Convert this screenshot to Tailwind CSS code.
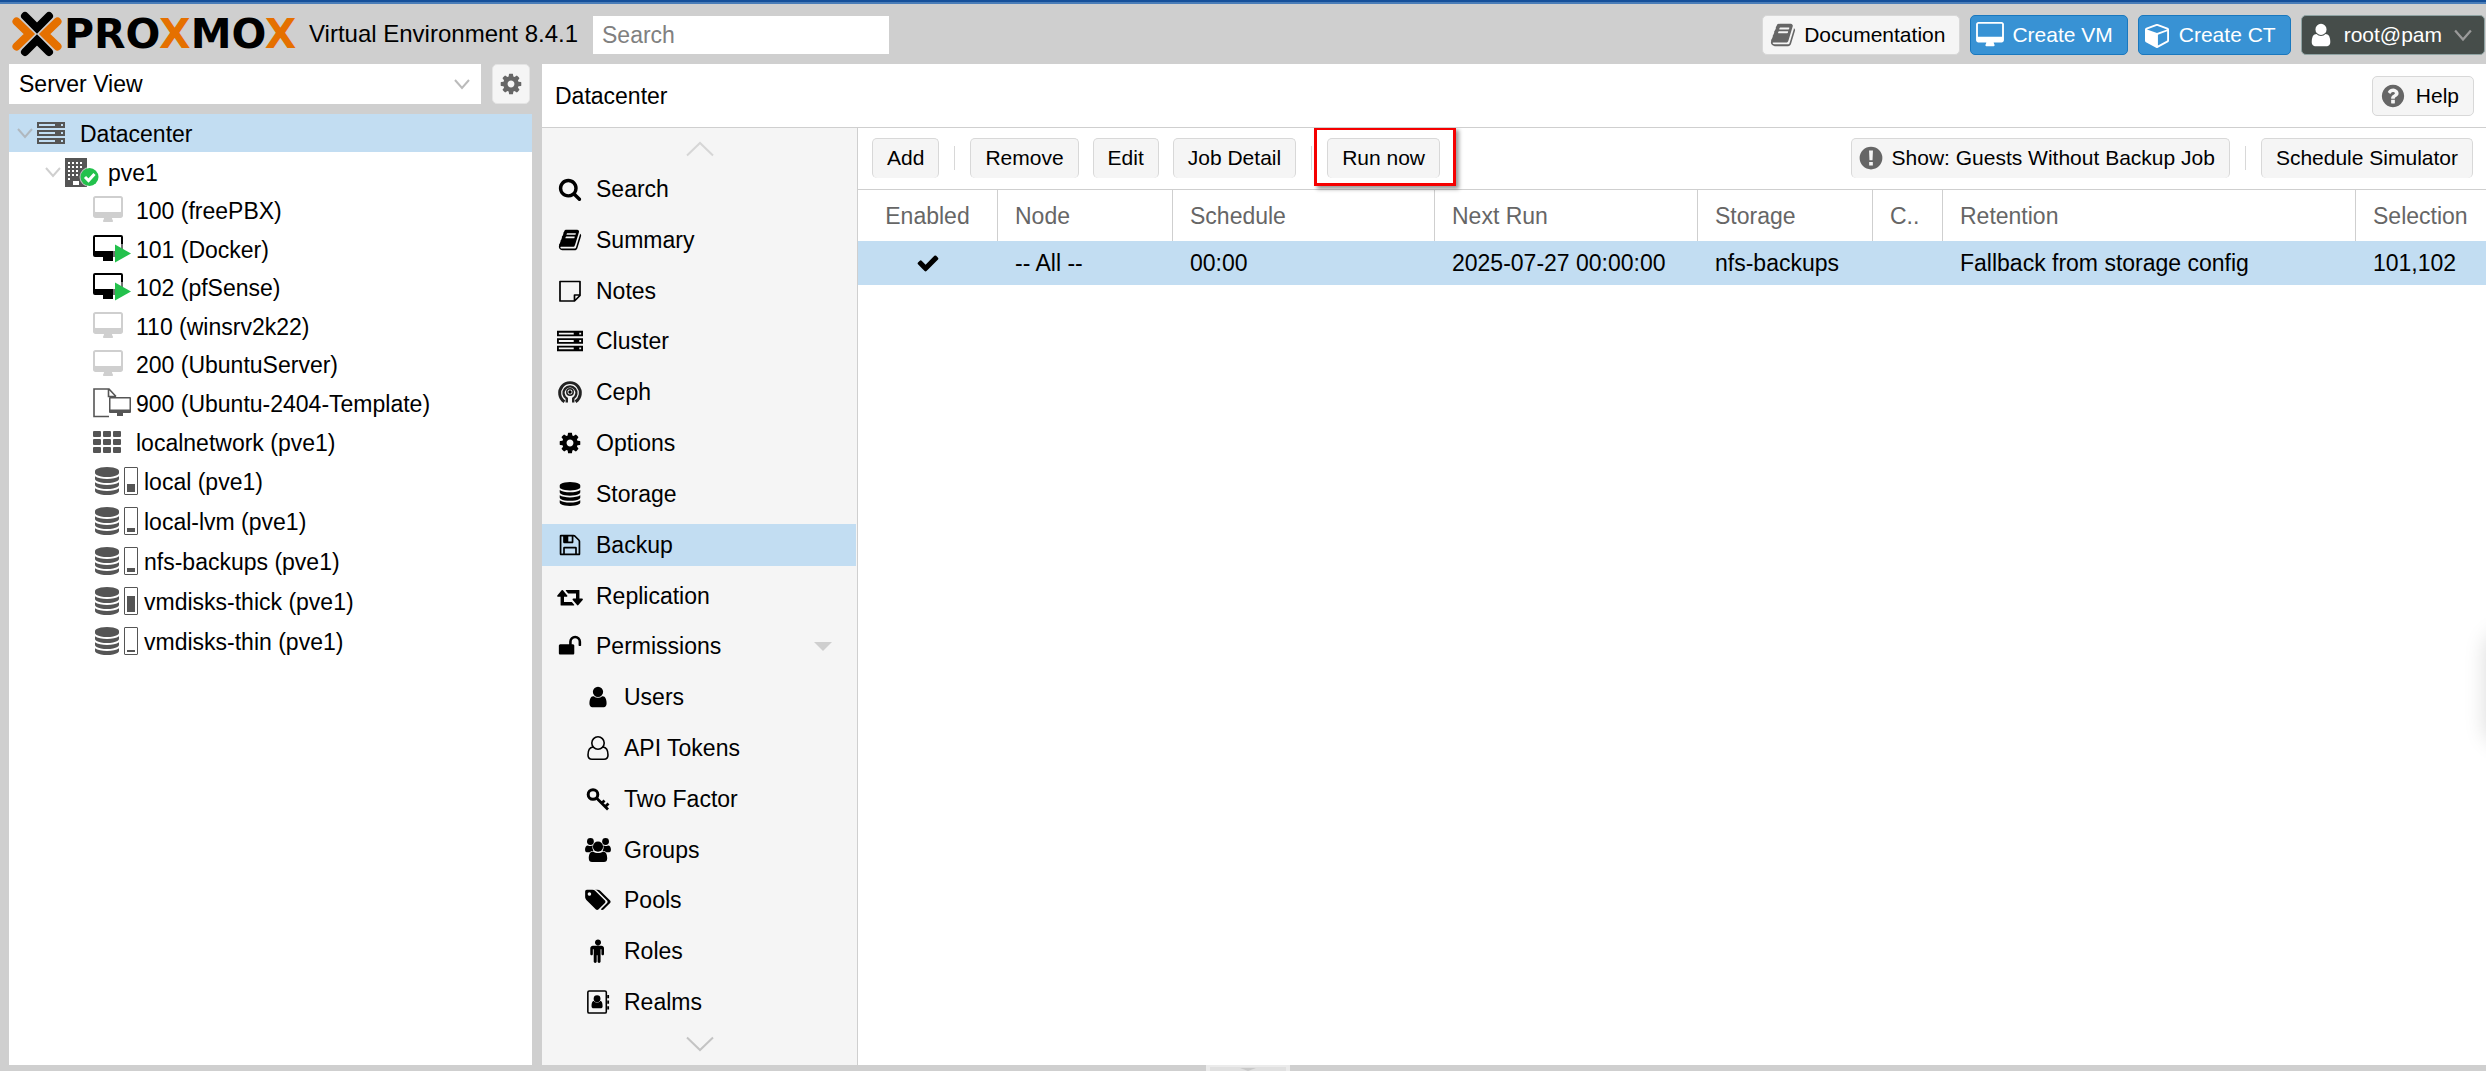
<!DOCTYPE html>
<html lang="en">
<head>
<meta charset="utf-8">
<title>Proxmox Virtual Environment</title>
<script src="https://cdn.jsdelivr.net/npm/@tailwindcss/browser@4"></script>
</head>
<body class="flex h-screen flex-col overflow-hidden bg-[#cfcfcf] font-['Liberation_Sans',Arial,sans-serif] text-[23px] leading-7 text-black">

<svg class="hidden" aria-hidden="true">
  <symbol id="i-search" viewBox="0 0 1792 1792"><path d="M1216 832q0-185-131.5-316.5t-316.5-131.5-316.5 131.5-131.5 316.5 131.5 316.5 316.5 131.5 316.5-131.5 131.5-316.5zm512 832q0 52-38 90t-90 38q-54 0-90-38l-343-342q-179 124-399 124-143 0-273.5-55.5t-225-150-150-225-55.5-273.5 55.5-273.5 150-225 225-150 273.5-55.5 273.5 55.5 225 150 150 225 55.5 273.5q0 220-124 399l343 343q37 37 37 90z"/></symbol>
  <symbol id="i-book" viewBox="0 0 1792 1792"><path d="M1703 478q40 57 18 129l-275 906q-19 64-76.5 107.5t-122.5 43.5h-923q-77 0-148.5-53.5t-99.5-131.5q-24-67-2-127 0-4 3-27t4-37q1-8-3-21.5t-3-19.5q2-11 8-21t16.5-23.5 16.5-23.5q23-38 45-91.5t30-91.5q3-10 .5-30t-.5-28q3-11 17-28t17-23q21-36 42-92t25-90q1-9-2.5-32t.5-28q4-13 22-30.5t22-22.5q19-26 42.5-84.5t27.5-96.5q1-8-3-25.5t-2-26.5q2-8 9-18t18-23 17-21q8-12 16.5-30.5t15-35 16-36 19.5-32 26.5-23.5 36-11.5 47.5 5.5l-1 3q38-9 51-9h761q74 0 114 56t18 130l-274 906q-36 119-71.5 153.5t-128.5 34.5h-869q-27 0-38 15-11 16-1 43 24 70 144 70h923q29 0 56-15.5t35-41.5l300-987q7-22 5-57 38 15 59 43zm-1064 2q-4 13 2 22.5t20 9.5h608q13 0 25.5-9.5t16.5-22.5l21-64q4-13-2-22.5t-20-9.5h-608q-13 0-25.5 9.5t-16.5 22.5zm-83 256q-4 13 2 22.5t20 9.5h608q13 0 25.5-9.5t16.5-22.5l21-64q4-13-2-22.5t-20-9.5h-608q-13 0-25.5 9.5t-16.5 22.5z"/></symbol>
  <symbol id="i-note" viewBox="0 0 24 24"><path d="M2 2.500 H22 V16.500 L16.500 22 H2 Z M22 16 H16.500 V22" fill="none" stroke="currentColor" stroke-width="1.700" stroke-linejoin="round"/></symbol>
  <symbol id="i-server" viewBox="0 0 28 24"><path fill-rule="evenodd" d="M0 1H28V7H0ZM2 3V5H18V3ZM24 3V5H26V3ZM0 9H28V15H0ZM2 11V13H18V11ZM24 11V13H26V11ZM0 17H28V23H0ZM2 19V21H18V19ZM24 19V21H26V19Z"/></symbol>
  <symbol id="i-ceph" viewBox="0 0 26 26"><g fill="none" stroke="#222"><path d="M7 23.500 A11.200 11.200 0 1 1 19 23.500" stroke-width="3.200"/><path d="M9.500 24.500 V20 A7 7 0 1 1 16.500 20 V24.500" stroke-width="2.600"/><circle cx="13" cy="13" r="3.500" stroke-width="1.600"/></g><circle cx="13" cy="13" r="1.800"/></symbol>
  <symbol id="i-cog" viewBox="0 0 1792 1792"><path d="M1152 896q0-106-75-181t-181-75-181 75-75 181 75 181 181 75 181-75 75-181zm512-109v222q0 12-8 23t-20 13l-185 28q-19 54-39 91 35 50 107 138 10 12 10 25t-9 23q-27 37-99 108t-94 71q-12 0-26-9l-138-108q-44 23-91 38-16 136-29 186-7 28-36 28h-222q-14 0-24.5-8.5t-11.5-21.5l-28-184q-49-16-90-37l-141 107q-10 9-25 9-14 0-25-11-126-114-165-168-7-10-7-23 0-12 8-23 15-21 51-66.5t54-70.500q-27-50-41-99l-183-27q-13-2-21-12.5t-8-23.5v-222q0-12 8-23t19-13l186-28q14-46 39-92-40-57-107-138-10-12-10-24 0-10 9-23 26-36 98.500-107.500t94.500-71.500q13 0 26 10l138 107q44-23 91-38 16-136 29-186 7-28 36-28h222q14 0 24.500 8.500t11.500 21.500l28 184q49 16 90 37l142-107q9-9 24-9 13 0 25 10 129 119 165 170 7 8 7 22 0 12-8 23-15 21-51 66.500t-54 70.500q26 50 41 98l183 28q13 2 21 12.500t8 23.500z"/></symbol>
  <symbol id="i-db" viewBox="0 0 1792 1792"><path d="M896 768q237 0 443-43t325-127v170q0 69-103 128t-280 93.500-385 34.500-385-34.500-280-93.500-103-128v-170q119 84 325 127t443 43zm0 768q237 0 443-43t325-127v170q0 69-103 128t-280 93.500-385 34.500-385-34.500-280-93.500-103-128v-170q119 84 325 127t443 43zm0-384q237 0 443-43t325-127v170q0 69-103 128t-280 93.500-385 34.500-385-34.500-280-93.500-103-128v-170q119 84 325 127t443 43zm0-1152q208 0 385 34.500t280 93.500 103 128v128q0 69-103 128t-280 93.500-385 34.500-385-34.500-280-93.500-103-128v-128q0-69 103-128t280-93.500 385-34.500z"/></symbol>
  <symbol id="i-floppy" viewBox="0 0 1792 1792"><path d="M512 1536h768v-384h-768v384zm896 0h128v-896q0-14-10-38.500t-20-34.500l-281-281q-10-10-34-20t-39-10v416q0 40-28 68t-68 28h-576q-40 0-68-28t-28-68v-416h-128v1280h128v-416q0-40 28-68t68-28h832q40 0 68 28t28 68v416zm-384-928v-320q0-13-9.500-22.500t-22.500-9.500h-192q-13 0-22.500 9.500t-9.500 22.500v320q0 13 9.500 22.500t22.500 9.500h192q13 0 22.500-9.500t9.500-22.500zm640 32v928q0 40-28 68t-68 28h-1344q-40 0-68-28t-28-68v-1344q0-40 28-68t68-28h928q40 0 88 20t76 48l280 280q28 28 48 76t20 88z"/></symbol>
  <symbol id="i-retweet" viewBox="-64 0 1920 1792"><path d="M1216 1568q0 13-9.500 22.500t-22.500 9.500h-960q-8 0-13.500-2t-9-7-5.500-8-3-11.500-1-11.500v-600h-192q-26 0-45-19t-19-45q0-24 15-41l320-384q19-22 49-22t49 22l320 384q15 17 15 41 0 26-19 45t-45 19h-192v384h576q16 0 25 11l160 192q7 10 7 21zm640-416q0 24-15 41l-320 384q-20 23-49 23t-49-23l-320-384q-15-17-15-41 0-26 19-45t45-19h192v-384h-576q-16 0-25-12l-160-192q-7-9-7-20 0-13 9.500-22.500t22.500-9.500h960q8 0 13.500 2t9 7 5.500 8 3 11.500 1 11.500v600h192q26 0 45 19t19 45z"/></symbol>
  <symbol id="i-unlock" viewBox="0 0 1792 1792"><path d="M1728 576v256q0 26-19 45t-45 19h-64q-26 0-45-19t-19-45v-256q0-106-75-181t-181-75-181 75-75 181v192h96q40 0 68 28t28 68v576q0 40-28 68t-68 28h-960q-40 0-68-28t-28-68v-576q0-40 28-68t68-28h672v-192q0-185 131.500-316.500t316.500-131.500 316.500 131.500 131.500 316.500z"/></symbol>
  <symbol id="i-user" viewBox="0 0 1792 1792"><path d="M1536 1399q0 109-62.500 187t-150.500 78h-854q-88 0-150.500-78t-62.500-187q0-85 8.500-160.500t31.500-152 58.500-131 94-89 134.500-34.500q131 128 313 128t313-128q76 0 134.500 34.500t94 89 58.500 131 31.500 152 8.500 160.500zm-256-887q0 159-112.500 271.500t-271.500 112.500-271.500-112.500-112.500-271.500 112.500-271.500 271.500-112.500 271.500 112.500 112.500 271.500z"/></symbol>
  <symbol id="i-user-o" viewBox="0 0 24 24"><g fill="none" stroke="currentColor" stroke-width="1.600"><circle cx="12" cy="7" r="6.200"/><path d="M7 11 C3 11.500 2 16 2 19 C2 22 4 23.200 6 23.200 H18 C20 23.200 22 22 22 19 C22 16 21 11.500 17 11"/></g></symbol>
  <symbol id="i-key" viewBox="0 0 24 24"><g fill="none" stroke="currentColor"><circle cx="7" cy="7.500" r="4.800" stroke-width="3"/><path d="M10.500 11 L22 22.500 M15.500 16.500 L18.500 13.500 M19 20 L22.500 16.500" stroke-width="2.800"/></g></symbol>
  <symbol id="i-users" viewBox="0 0 28 26"><circle cx="5.800" cy="3.800" r="3.700"/><circle cx="22.200" cy="3.800" r="3.700"/><path d="M3 8 C5 9 7 8.800 8.300 8.200 A6 6 0 0 0 9 14 C7 14 6 14.500 5 15.500 H2.500 C0 15.500 0 13.500 0 12.500 C0 10 1 8 3 8Z M25 8 C23 9 21 8.800 19.700 8.200 A6 6 0 0 1 19 14 C21 14 22 14.500 23 15.500 H25.500 C28 15.500 28 13.500 28 12.500 C28 10 27 8 25 8Z"/><circle cx="14" cy="9.400" r="5.500"/><path d="M8.500 14.500 C12 17 16 17 19.500 14.500 C23 14.500 24 18.500 24 22 C24 25 22.500 26 20.500 26 H7.500 C5.500 26 4 25 4 22 C4 18.500 5 14.500 8.500 14.500Z"/></symbol>
  <symbol id="i-tags" viewBox="0 0 1920 1792"><path d="M448 448q0-53-37.500-90.500t-90.500-37.500-90.500 37.500-37.500 90.500 37.500 90.500 90.500 37.500 90.500-37.500 37.500-90.500zm1067 576q0 53-37 90l-491 492q-39 37-91 37-53 0-90-37l-715-716q-38-37-64.500-101t-26.500-117v-416q0-52 38-90t90-38h416q53 0 117 26.500t102 64.500l715 714q37 39 37 91zm384 0q0 53-37 90l-491 492q-39 37-91 37-36 0-59-14t-53-45l470-470q37-37 37-90 0-52-37-91l-715-714q-38-38-102-64.500t-117-26.500h224q53 0 117 26.500t102 64.500l715 714q37 39 37 91z"/></symbol>
  <symbol id="i-male" viewBox="0 0 1792 1792"><path d="M1344 704v416q0 40-28 68t-68 28-68-28-28-68v-352h-64v912q0 46-33 79t-79 33-79-33-33-79v-464h-64v464q0 46-33 79t-79 33-79-33-33-79v-912h-64v352q0 40-28 68t-68 28-68-28-28-68v-416q0-80 56-136t136-56h640q80 0 136 56t56 136zm-224-448q0 93-65.500 158.500t-158.500 65.500-158.500-65.500-65.500-158.500 65.500-158.500 158.500-65.500 158.500 65.500 65.500 158.500z"/></symbol>
  <symbol id="i-address" viewBox="0 0 24 26"><rect x="1" y="1" width="20" height="24" rx="1.500" fill="none" stroke="currentColor" stroke-width="1.700"/><circle cx="11" cy="9.500" r="3.700"/><path d="M7.500 12 C9.500 14.200 12.500 14.200 14.500 12 C16.500 12 17 15 17 17.500 C17 19 16 19.800 15 19.800 H7 C6 19.800 5 19 5 17.500 C5 15 5.500 12 7.500 12Z M22 5.500 H24 V9 H22Z M22 11.500 H24 V15 H22Z M22 17.500 H24 V21 H22Z"/></symbol>
  <symbol id="i-desktop" viewBox="-64 0 1920 1792"><path d="M1728 992v-832q0-13-9.500-22.500t-22.500-9.500h-1600q-13 0-22.500 9.500t-9.500 22.500v832q0 13 9.500 22.500t22.500 9.500h1600q13 0 22.500-9.500t9.500-22.500zm128-832v1088q0 66-47 113t-113 47h-544q0 37 16 77.500t32 71 16 43.500q0 26-19 45t-45 19h-512q-26 0-45-19t-19-45q0-14 16-44t32-70 16-78h-544q-66 0-113-47t-47-113v-1088q0-66 47-113t113-47h1600q66 0 113 47t47 113z"/></symbol>
  <symbol id="i-cube" viewBox="0 0 1664 1792"><path d="M896 1629l640-349v-636l-640 233v752zm-64-865l698-254-698-254-698 254 698 254zm832-252v768q0 35-18 65t-49 47l-704 384q-28 16-61 16t-61-16l-704-384q-31-17-49-47t-18-65v-768q0-40 23-73t61-47l704-256q22-8 44-8t44 8l704 256q38 14 61 47t23 73z"/></symbol>
  <symbol id="i-question" viewBox="0 0 1792 1792"><path d="M1024 1376v-192q0-14-9-23t-23-9h-192q-14 0-23 9t-9 23v192q0 14 9 23t23 9h192q14 0 23-9t9-23zm256-672q0-88-55.500-163t-138.500-116-170-41q-243 0-371 213-15 24 8 42l132 100q7 6 19 6 16 0 25-12 53-68 86-92 34-24 86-24 48 0 85.500 26t37.500 59q0 38-20 61t-68 45q-63 28-115.500 86.500t-52.500 125.500v36q0 14 9 23t23 9h192q14 0 23-9t9-23q0-19 21.500-49.500t54.500-49.500q32-18 49-28.500t46-35 44.500-48 28-60.500 12.500-81zm384 192q0 209-103 385.500t-279.500 279.500-385.500 103-385.500-103-279.500-279.500-103-385.500 103-385.500 279.500-279.500 385.500-103 385.500 103 279.500 279.500 103 385.500z"/></symbol>
  <symbol id="i-exclaim" viewBox="0 0 24 24"><path fill-rule="evenodd" d="M12 1.500A10.500 10.500 0 1 0 12 22.500A10.500 10.500 0 1 0 12 1.500ZM10.200 5H13.800L13.400 14H10.600ZM10.300 15.700H13.700V19H10.300Z"/></symbol>
  <symbol id="i-check" viewBox="0 0 1792 1792"><path d="M1671 566q0 40-28 68l-724 724-136 136q-28 28-68 28t-68-28l-136-136-362-362q-28-28-28-68t28-68l136-136q28-28 68-28t68 28l294 295 656-657q28-28 68-28t68 28l136 136q28 28 28 68z"/></symbol>
  <symbol id="i-down" viewBox="0 0 16 16"><path d="M1 4 L8 12 L15 4" fill="none" stroke="currentColor" stroke-width="2"/></symbol>
  <symbol id="i-wide-down" viewBox="0 0 28 16"><path d="M1 1.500 L14 14 L27 1.500" fill="none" stroke="currentColor" stroke-width="2"/></symbol>
  <symbol id="i-wide-up" viewBox="0 0 28 16"><path d="M1 14.500 L14 2 L27 14.500" fill="none" stroke="currentColor" stroke-width="2"/></symbol>
  <symbol id="i-node" viewBox="0 0 36 30"><path fill-rule="evenodd" d="M0 1H22V30H0ZM3 5V7H5V5ZM7 5V7H9V5ZM11 5V7H13V5ZM15 5V7H17V5ZM3 9V11H5V9ZM7 9V11H9V9ZM11 9V11H13V9ZM15 9V11H17V9ZM3 13V15H5V13ZM7 13V15H9V13ZM11 13V15H13V13ZM3 17V19H5V17ZM7 17V19H9V17ZM11 17V19H13V17ZM3 21V23H5V21ZM8 24V28H14V24Z"/><circle cx="24.500" cy="20" r="10" fill="#fff" fill-opacity=".6"/><circle cx="24.500" cy="20" r="9" fill="#23c14c"/><path d="M20 20 L23.500 23.500 L29.500 17" fill="none" stroke="#fff" stroke-width="3"/></symbol>
  <symbol id="i-running" viewBox="0 0 38 30"><path fill-rule="evenodd" d="M2 1H28Q30 1 30 3V21Q30 23 28 23H20V27H10V23H2Q0 23 0 21V3Q0 1 2 1ZM2 3V17H28V3Z"/><path d="M20 10H30V27H20Z" fill="#fff" fill-opacity=".45"/><path d="M22 10.500L38 19.500L22 28.500Z" fill="#23c14c"/></symbol>
  <symbol id="i-template" viewBox="0 0 38 30"><path d="M16 28.500H1V1H16L23 8.500M15.500 1V8.500H23" fill="none" stroke="currentColor" stroke-width="1.600"/><path fill-rule="evenodd" d="M17 9H37Q38 9 38 10V24Q38 25 37 25H30V28H24V25H17Q16 25 16 24V10Q16 9 17 9ZM17.500 10.500V21.500H36.500V10.500Z"/></symbol>
  <symbol id="i-grid" viewBox="0 0 28 24"><path d="M1 1h6a1 1 0 0 1 1 1v4a1 1 0 0 1-1 1h-6a1 1 0 0 1-1-1v-4a1 1 0 0 1 1-1zM11 1h6a1 1 0 0 1 1 1v4a1 1 0 0 1-1 1h-6a1 1 0 0 1-1-1v-4a1 1 0 0 1 1-1zM21 1h6a1 1 0 0 1 1 1v4a1 1 0 0 1-1 1h-6a1 1 0 0 1-1-1v-4a1 1 0 0 1 1-1zM1 9h6a1 1 0 0 1 1 1v4a1 1 0 0 1-1 1h-6a1 1 0 0 1-1-1v-4a1 1 0 0 1 1-1zM11 9h6a1 1 0 0 1 1 1v4a1 1 0 0 1-1 1h-6a1 1 0 0 1-1-1v-4a1 1 0 0 1 1-1zM21 9h6a1 1 0 0 1 1 1v4a1 1 0 0 1-1 1h-6a1 1 0 0 1-1-1v-4a1 1 0 0 1 1-1zM1 17h6a1 1 0 0 1 1 1v4a1 1 0 0 1-1 1h-6a1 1 0 0 1-1-1v-4a1 1 0 0 1 1-1zM11 17h6a1 1 0 0 1 1 1v4a1 1 0 0 1-1 1h-6a1 1 0 0 1-1-1v-4a1 1 0 0 1 1-1zM21 17h6a1 1 0 0 1 1 1v4a1 1 0 0 1-1 1h-6a1 1 0 0 1-1-1v-4a1 1 0 0 1 1-1z"/></symbol>
</svg>

<div class="h-1 shrink-0 border-b-2 border-[#4a7db8] bg-[#15509a]"></div>

<header class="flex h-[60px] shrink-0 items-center pt-[2px] pl-[11px]">
  <a href="#" class="mb-[3px] flex items-center" aria-label="Proxmox">
    <svg class="h-[46px] w-[52px]" viewBox="0 0 52 46" fill="none" stroke-width="8" stroke-linecap="round">
      <path d="M5.500 10.500 L18.500 23 L5.500 35.500 M46.500 10.500 L33.500 23 L46.500 35.500" stroke="#e57000"/>
      <path d="M14 5 L26 17.500 L38 5 M14 41 L26 28.500 L38 41" stroke="#cfcfcf" stroke-width="10" stroke-linecap="butt"/>
      <path d="M14 5 L26 17 L38 5 M14 41 L26 29 L38 41" stroke="#000"/>
    </svg>
    <span class="w-[246px] pl-px font-['DejaVu_Sans',sans-serif] text-[41px] leading-[46px] font-bold">PRO<span class="text-[#e57000]">X</span>MO<span class="text-[#e57000]">X</span></span>
  </a>
  <span class="mb-[2px] w-[284px] text-[24px] whitespace-nowrap">Virtual Environment 8.4.1</span>
  <input type="search" aria-label="Search" placeholder="Search" class="h-[38px] w-[296px] bg-white px-[9px] placeholder:text-[#808080]">
  <div class="ml-auto flex gap-[10px] pr-px text-[21px]">
    <a href="#" class="flex h-10 items-center gap-2 rounded-[5px] border border-[#d8d8d8] bg-[#f5f5f5] pr-[14px] pl-[7px]"><svg class="size-[26px] fill-[#666]"><use href="#i-book"/></svg>Documentation</a>
    <button class="flex h-10 items-center gap-2 rounded-[5px] border border-[#1a78be] bg-[#3892d4] pr-[14px] pl-[5px] text-white"><svg class="h-[26px] w-7 fill-white"><use href="#i-desktop"/></svg>Create VM</button>
    <button class="flex h-10 items-center gap-[10px] rounded-[5px] border border-[#1a78be] bg-[#3892d4] pr-[14px] pl-[6px] text-white"><svg class="h-[26px] w-6 fill-white"><use href="#i-cube"/></svg>Create CT</button>
    <button class="flex h-10 items-center rounded-[5px] border border-[#8fa3a3] bg-[#464d4a] pr-3 pl-[6px] text-white"><svg class="mr-[10px] size-[26px] fill-white"><use href="#i-user"/></svg>root@pam<svg class="ml-3 size-[18px] text-[#9a9a9a]"><use href="#i-down"/></svg></button>
  </div>
</header>

<div class="flex min-h-0 flex-1 pb-[6px]">
  <aside class="ml-[9px] flex w-[523px] shrink-0 flex-col">
    <div class="flex h-[50px] items-start gap-[11px]">
      <div class="relative w-[472px] bg-white">
        <select aria-label="View" class="block h-10 w-full appearance-none pl-[10px]"><option>Server View</option></select>
        <svg class="pointer-events-none absolute top-3 right-[11px] size-4 text-[#bbb]"><use href="#i-down"/></svg>
      </div>
      <button aria-label="Settings" class="flex h-10 w-[38px] items-center justify-center rounded-[5px] border border-[#e4e4e4] bg-[#f5f5f5]"><svg class="size-6 fill-[#666]"><use href="#i-cog"/></svg></button>
    </div>
    <nav aria-label="Resource tree" class="flex-1 bg-white">
      <ul class="fill-[#555] text-[#555] [&_a]:flex [&_a]:h-full [&_a]:items-center [&_span]:pt-[2px] [&_span]:text-black">
        <li class="h-[38px] bg-[#c2ddf2]"><a href="#" class="pl-2"><svg class="mr-1 size-4 text-[#b0b8bf]"><use href="#i-down"/></svg><svg class="mr-[15px] h-6 w-7"><use href="#i-server"/></svg><span>Datacenter</span></a></li>
        <li class="h-[39px]"><a href="#" class="pl-9"><svg class="mr-1 size-4 text-[#cfcfcf]"><use href="#i-down"/></svg><svg class="mr-[7px] h-[30px] w-9"><use href="#i-node"/></svg><span>pve1</span></a></li>
        <li class="h-[38px]"><a href="#" class="pl-[84px]"><svg class="mr-[13px] h-7 w-[30px] fill-[#cfcfcf]"><use href="#i-desktop"/></svg><span>100 (freePBX)</span></a></li>
        <li class="h-[39px]"><a href="#" class="pl-[84px]"><svg class="mr-[5px] h-[30px] w-[38px] fill-black"><use href="#i-running"/></svg><span>101 (Docker)</span></a></li>
        <li class="h-[38px]"><a href="#" class="pl-[84px]"><svg class="mr-[5px] h-[30px] w-[38px] fill-black"><use href="#i-running"/></svg><span>102 (pfSense)</span></a></li>
        <li class="h-[39px]"><a href="#" class="pl-[84px]"><svg class="mr-[13px] h-7 w-[30px] fill-[#cfcfcf]"><use href="#i-desktop"/></svg><span>110 (winsrv2k22)</span></a></li>
        <li class="h-[38px]"><a href="#" class="pl-[84px]"><svg class="mr-[13px] h-7 w-[30px] fill-[#cfcfcf]"><use href="#i-desktop"/></svg><span>200 (UbuntuServer)</span></a></li>
        <li class="h-[39px]"><a href="#" class="pl-[84px]"><svg class="mr-[5px] h-[30px] w-[38px]"><use href="#i-template"/></svg><span>900 (Ubuntu-2404-Template)</span></a></li>
        <li class="h-[39px]"><a href="#" class="pl-[84px]"><svg class="mr-[15px] h-6 w-7"><use href="#i-grid"/></svg><span>localnetwork (pve1)</span></a></li>
        <li class="h-10"><a href="#" class="pl-[84px]"><svg class="size-7"><use href="#i-db"/></svg><i class="mr-[6px] ml-[3px] flex h-7 w-[14px] items-end rounded-[1px] border border-[#555] p-[2px]"><i class="w-full bg-[#555]" style="height:8px"></i></i><span>local (pve1)</span></a></li>
        <li class="h-10"><a href="#" class="pl-[84px]"><svg class="size-7"><use href="#i-db"/></svg><i class="mr-[6px] ml-[3px] flex h-7 w-[14px] items-end rounded-[1px] border border-[#555] p-[2px]"><i class="w-full bg-[#555]" style="height:4px"></i></i><span>local-lvm (pve1)</span></a></li>
        <li class="h-10"><a href="#" class="pl-[84px]"><svg class="size-7"><use href="#i-db"/></svg><i class="mr-[6px] ml-[3px] flex h-7 w-[14px] items-end rounded-[1px] border border-[#555] p-[2px]"><i class="w-full bg-[#555]" style="height:4px"></i></i><span>nfs-backups (pve1)</span></a></li>
        <li class="h-10"><a href="#" class="pl-[84px]"><svg class="size-7"><use href="#i-db"/></svg><i class="mr-[6px] ml-[3px] flex h-7 w-[14px] items-end rounded-[1px] border border-[#555] p-[2px]"><i class="w-full bg-[#555]" style="height:16px"></i></i><span>vmdisks-thick (pve1)</span></a></li>
        <li class="h-[39px]"><a href="#" class="pl-[84px]"><svg class="size-7"><use href="#i-db"/></svg><i class="mr-[6px] ml-[3px] flex h-7 w-[14px] items-end rounded-[1px] border border-[#555] p-[2px]"><i class="w-full bg-[#555]" style="height:2px"></i></i><span>vmdisks-thin (pve1)</span></a></li>
      </ul>
    </nav>
  </aside>

  <main class="ml-[10px] flex min-w-0 flex-1 flex-col bg-white">
    <div class="flex h-16 shrink-0 items-center justify-between border-b border-[#cfcfcf] pr-3 pl-[13px]">
      <h1>Datacenter</h1>
      <button class="flex h-10 items-center gap-[10px] rounded-[5px] border border-[#d8d8d8] bg-[#f5f5f5] pr-[14px] pl-[7px] text-[21px]"><svg class="size-[26px] fill-[#666]"><use href="#i-question"/></svg>Help</button>
    </div>
    <div class="flex min-h-0 flex-1">
      <nav aria-label="Datacenter" class="flex w-[316px] shrink-0 flex-col items-center border-r border-[#cfcfcf] bg-[#f5f5f5]">
        <button aria-label="Scroll up" class="h-10 shrink-0 pt-[2px]"><svg class="h-4 w-7 text-[#d6d6d6]"><use href="#i-wide-up"/></svg></button>
        <ul class="flex w-full flex-1 flex-col justify-between pr-px [&_a]:flex [&_a]:h-[42px] [&_a]:items-center [&_a]:gap-3 [&_a]:pr-6 [&_svg]:h-6 [&_svg]:w-7">
          <li><a href="#" class="pl-[14px]"><svg><use href="#i-search"/></svg>Search</a></li>
          <li><a href="#" class="pl-[14px]"><svg><use href="#i-book"/></svg>Summary</a></li>
          <li><a href="#" class="pl-[14px]"><svg><use href="#i-note"/></svg>Notes</a></li>
          <li><a href="#" class="pl-[14px]"><svg class="px-[1px]"><use href="#i-server"/></svg>Cluster</a></li>
          <li><a href="#" class="pl-[14px]"><svg><use href="#i-ceph"/></svg>Ceph</a></li>
          <li><a href="#" class="pl-[14px]"><svg><use href="#i-cog"/></svg>Options</a></li>
          <li><a href="#" class="pl-[14px]"><svg><use href="#i-db"/></svg>Storage</a></li>
          <li class="bg-[#c2ddf2]"><a href="#" class="pl-[14px]"><svg><use href="#i-floppy"/></svg>Backup</a></li>
          <li><a href="#" class="pl-[14px]"><svg><use href="#i-retweet"/></svg>Replication</a></li>
          <li><a href="#" class="pl-[14px]"><svg><use href="#i-unlock"/></svg>Permissions<i class="ml-auto border-x-[9px] border-t-[9px] border-x-transparent border-t-[#cfcfcf]"></i></a></li>
          <li><a href="#" class="pl-[42px]"><svg><use href="#i-user"/></svg>Users</a></li>
          <li><a href="#" class="pl-[42px]"><svg><use href="#i-user-o"/></svg>API Tokens</a></li>
          <li><a href="#" class="pl-[42px]"><svg><use href="#i-key"/></svg>Two Factor</a></li>
          <li><a href="#" class="pl-[42px]"><svg><use href="#i-users"/></svg>Groups</a></li>
          <li><a href="#" class="pl-[42px]"><svg><use href="#i-tags"/></svg>Pools</a></li>
          <li><a href="#" class="pl-[42px]"><svg><use href="#i-male"/></svg>Roles</a></li>
          <li><a href="#" class="pl-[42px]"><svg><use href="#i-address"/></svg>Realms</a></li>
        </ul>
        <button aria-label="Scroll down" class="h-[42px] shrink-0"><svg class="h-4 w-7 text-[#c4c4c4]"><use href="#i-wide-down"/></svg></button>
      </nav>

      <section class="relative min-w-0 flex-1 overflow-hidden">
        <div class="flex h-[62px] items-center justify-between border-b border-[#cfcfcf] pr-[13px] pb-[1px] pl-[14px] text-[21px] [&_button]:h-10 [&_button]:rounded-[5px] [&_button]:border [&_button]:border-b-0 [&_button]:border-[#d8d8d8] [&_button]:bg-[#f5f5f5] [&_button]:pb-[2px]">
          <div class="flex items-center gap-[14px]">
            <button class="px-[14px]">Add</button>
            <i class="mx-px h-6 w-px bg-[#d8d8d8]"></i>
            <button class="px-[14px]">Remove</button>
            <button class="px-[14px]">Edit</button>
            <button class="px-[14px]">Job Detail</button>
            <i class="mx-px h-6 w-px bg-[#d8d8d8]"></i>
            <div class="relative"><button class="px-[14px]">Run now</button><i class="absolute -top-[11px] -right-4 -bottom-[8px] -left-[13px] border-[3px] border-[#f50000] shadow-[3px_3px_4px_rgba(0,0,0,0.4)]"></i></div>
          </div>
          <div class="flex items-center gap-[14px]">
            <button class="flex items-center gap-2 pr-[14px] pl-[6px]"><svg class="size-[26px] fill-[#666]"><use href="#i-exclaim"/></svg>Show: Guests Without Backup Job</button>
            <i class="mx-px h-6 w-px bg-[#d8d8d8]"></i>
            <button class="px-[14px]">Schedule Simulator</button>
          </div>
        </div>
        <table class="w-full table-fixed border-separate border-spacing-0 text-left whitespace-nowrap">
          <colgroup><col class="w-[140px]"><col class="w-[175px]"><col class="w-[262px]"><col class="w-[263px]"><col class="w-[175px]"><col class="w-[70px]"><col><col class="w-[130px]"></colgroup>
          <thead class="text-[#666] [&_th]:h-[51px] [&_th]:border-r [&_th]:border-[#cfcfcf] [&_th]:p-0 [&_th]:pl-[17px] [&_th]:font-normal [&_th:last-child]:border-r-0">
            <tr><th class="text-center"><span class="pr-[17px]">Enabled</span></th><th>Node</th><th>Schedule</th><th>Next Run</th><th>Storage</th><th>C..</th><th>Retention</th><th>Selection</th></tr>
          </thead>
          <tbody class="bg-[#c2ddf2] [&_td]:h-11 [&_td]:p-0 [&_td]:pl-[17px]">
            <tr><td><svg class="ml-[41px] size-6" role="img" aria-label="Enabled"><use href="#i-check"/></svg></td><td>-- All --</td><td>00:00</td><td>2025-07-27 00:00:00</td><td>nfs-backups</td><td></td><td>Fallback from storage config</td><td>101,102</td></tr>
          </tbody>
        </table>
        <div class="absolute top-[505px] left-full h-[110px] w-10 rounded-2xl shadow-[0_0_22px_rgba(0,0,0,0.15)]"></div>
      </section>
    </div>
  </main>
</div>

<div class="absolute bottom-0 left-[1206px] flex h-[6px] w-[84px] items-end justify-center border-x-4 border-t-2 border-[#ebebeb] bg-[#e0e0e0]"><i class="border-x-8 border-t-[3px] border-x-transparent border-t-[#c8c8c8]"></i></div>
</body>
</html>
